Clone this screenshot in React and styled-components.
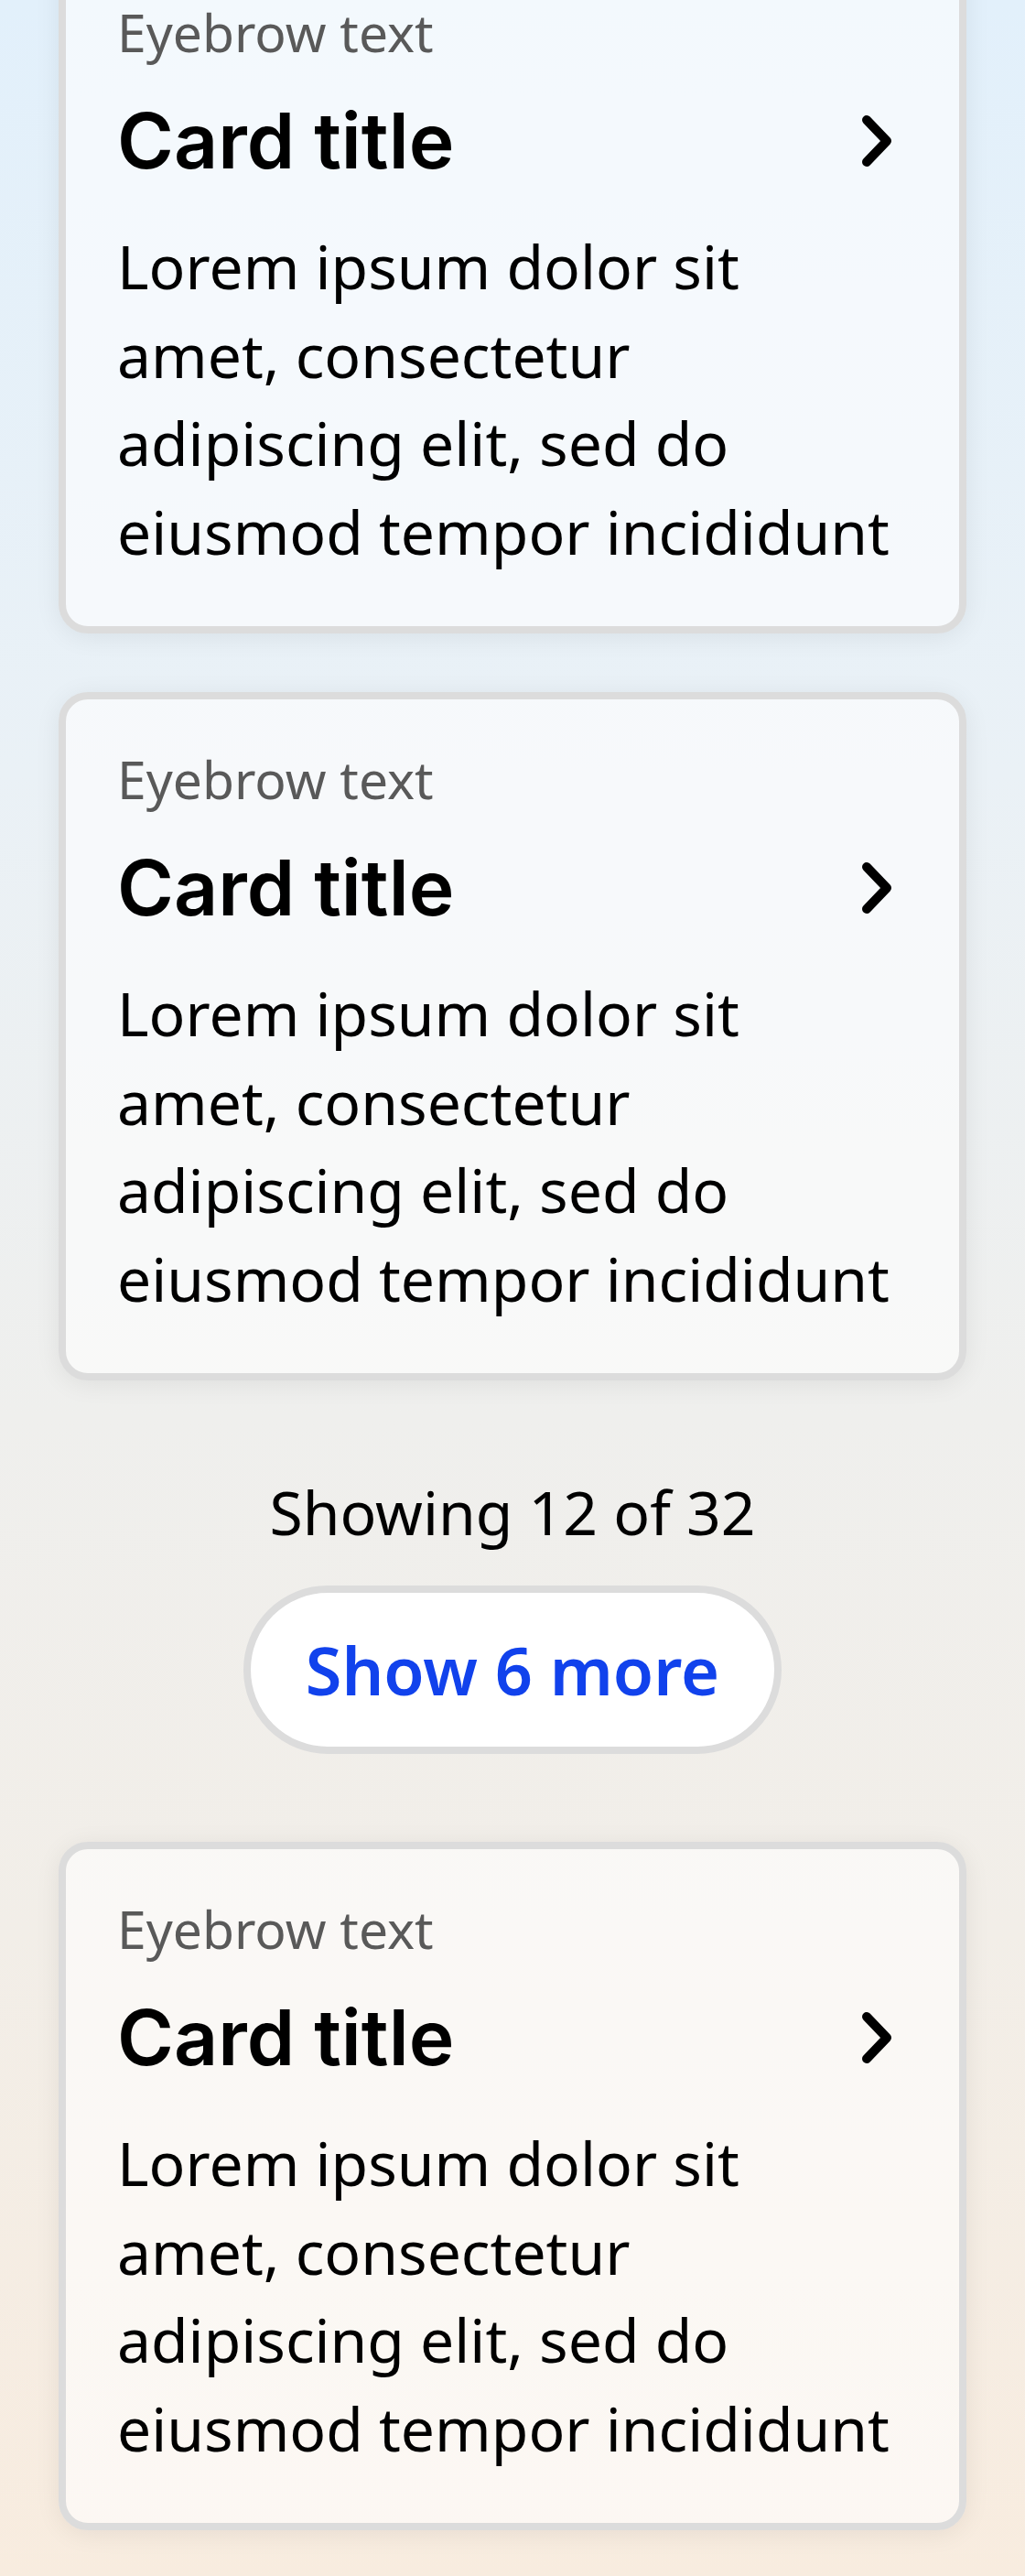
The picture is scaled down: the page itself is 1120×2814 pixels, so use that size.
import React from 'react';
import styled, { createGlobalStyle } from 'styled-components';

const GlobalStyle = createGlobalStyle`
  html, body {
    margin: 0;
    padding: 0;
  }
  body {
    min-height: 2814px;
    background: linear-gradient(180deg, #e2f0fb 0%, #eaf1f6 30%, #efefed 55%, #f2eee8 75%, #f8ecdf 100%);
    font-family: "Noto Sans", "Open Sans", sans-serif;
    overflow: hidden;
  }
`;

const Page = styled.main`
  display: flex;
  flex-direction: column;
  padding: 0 64px 50px;
  margin-top: -60px;
`;

const Card = styled.article`
  display: flex;
  flex-direction: column;
  padding: 52px 56px 56px;
  border: 8px solid #dcdcdc;
  border-radius: 32px;
  background: rgba(255, 255, 255, 0.6);
  box-shadow: 0 4px 28px rgba(0, 0, 0, 0.07);
  margin-bottom: ${props => props.$gap || 0}px;
`;

const Eyebrow = styled.div`
  font-size: 57px;
  line-height: 70px;
  color: #595959;
`;

const TitleRow = styled.div`
  display: flex;
  align-items: center;
  justify-content: space-between;
  margin-top: 34px;
`;

const Title = styled.h2`
  margin: 0;
  font-family: Inter, "Liberation Sans", sans-serif;
  font-weight: 600;
  font-size: 84px;
  line-height: 100px;
  color: #000;
`;

const Chevron = styled.svg`
  width: 32px;
  height: 56px;
  margin-right: 18px;
  flex-shrink: 0;
`;

const Body = styled.p`
  margin: 38px 0 0;
  font-size: 66px;
  line-height: 96.5px;
  color: #000;
`;

const More = styled.section`
  display: flex;
  flex-direction: column;
  align-items: center;
  gap: 33px;
  padding: 95px 0 96px;
`;

const Count = styled.div`
  font-size: 66px;
  line-height: 96px;
  color: #000;
`;

const MoreButton = styled.button`
  height: 184px;
  padding: 0 60px;
  border: 8px solid #dcdcdc;
  border-radius: 92px;
  background: #fff;
  font-family: "Noto Sans", sans-serif;
  font-weight: 600;
  font-size: 72px;
  color: #1142ec;
  cursor: pointer;
`;

const cards = [1, 2];
const text = 'Lorem ipsum dolor sit amet, consectetur adipiscing elit, sed do eiusmod tempor incididunt';

function InfoCard({ gap }) {
  return (
    <Card $gap={gap}>
      <Eyebrow>Eyebrow text</Eyebrow>
      <TitleRow>
        <Title>Card title</Title>
        <Chevron viewBox="0 0 32 56" fill="none">
          <path d="M5 5 L27 28 L5 51" stroke="#000" strokeWidth="10" strokeLinecap="round" strokeLinejoin="round" />
        </Chevron>
      </TitleRow>
      <Body>{text}</Body>
    </Card>
  );
}

export default function App() {
  return (
    <>
      <GlobalStyle />
      <Page>
        {cards.map(i => <InfoCard key={i} gap={i === 1 ? 64 : 0} />)}
        <More>
          <Count>Showing 12 of 32</Count>
          <MoreButton>Show 6 more</MoreButton>
        </More>
        <InfoCard />
      </Page>
    </>
  );
}
